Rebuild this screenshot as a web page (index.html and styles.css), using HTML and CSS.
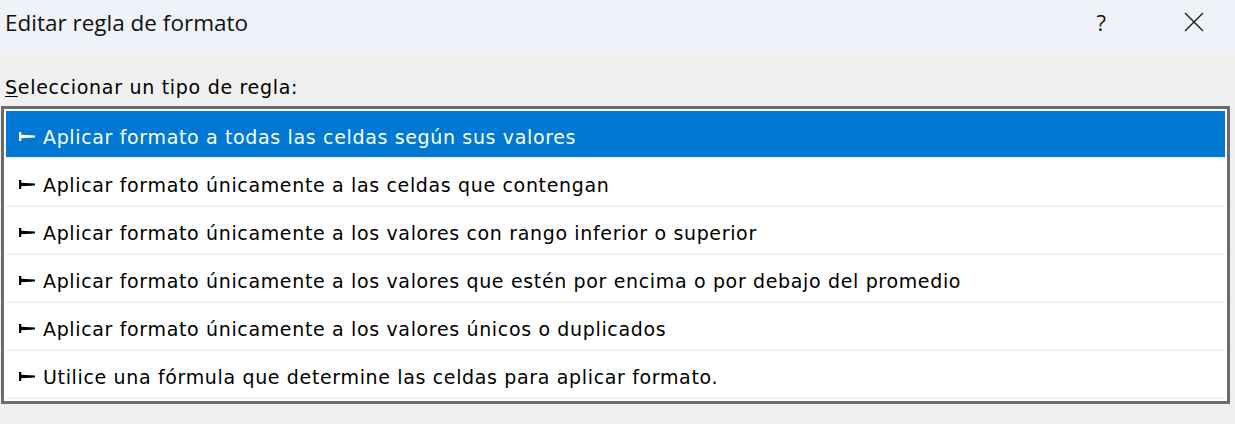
FILE: index.html
```html
<!DOCTYPE html>
<html lang="es">
<head>
  <meta charset="UTF-8">
  <meta name="viewport" content="width=device-width, initial-scale=1.0">
  <title>Editar regla de formato</title>
  <link rel="stylesheet" href="styles.css">
</head>
<body>
  <div class="titlebar">
    <span class="title">Editar regla de formato</span>
    <span class="help">?</span>
    <svg class="close" width="20" height="20" viewBox="0 0 20 20">
      <path d="M1 1 L19 19 M19 1 L1 19" stroke="#1b1b1b" stroke-width="1.4" fill="none"/>
    </svg>
  </div>

  <div class="content">
    <div class="label"><u>S</u>eleccionar un tipo de regla:</div>

    <div class="listbox">
      <div class="rule selected"><span class="marker"></span>Aplicar formato a todas las celdas según sus valores</div>
      <div class="rule"><span class="marker"></span>Aplicar formato únicamente a las celdas que contengan</div>
      <div class="rule"><span class="marker"></span>Aplicar formato únicamente a los valores con rango inferior o superior</div>
      <div class="rule"><span class="marker"></span>Aplicar formato únicamente a los valores que estén por encima o por debajo del promedio</div>
      <div class="rule"><span class="marker"></span>Aplicar formato únicamente a los valores únicos o duplicados</div>
      <div class="rule"><span class="marker"></span>Utilice una fórmula que determine las celdas para aplicar formato.</div>
    </div>
  </div>
</body>
</html>
```

FILE: styles.css
```css
body {
  margin: 0;
  padding: 0;
  background-color: #f0f0f0;
  font-family: "DejaVu Sans", sans-serif;
  color: #000;
}

.titlebar {
  height: 53px;
  background-color: #eff3f9;
  display: flex;
  align-items: center;
  padding: 0 31px 9px 5px;
  box-sizing: border-box;
}

.title {
  flex: 1;
  font-family: "Open Sans", "Noto Sans", sans-serif;
  font-size: 22.5px;
  color: #111;
}

.help {
  font-family: "Open Sans", "Noto Sans", sans-serif;
  font-size: 22px;
  color: #111;
  margin-right: 78px;
}

.close {
  display: block;
}

.content {
  padding-top: 21px;
}

.label {
  font-size: 19px;
  letter-spacing: 0.7px;
  line-height: 26px;
  padding-left: 5px;
  margin-bottom: 6px;
  color: #000;
}

.label u {
  text-underline-offset: 2px;
}

.listbox {
  margin: 0 5px 0 1px;
  border: 3px solid #6b6b6e;
  padding: 2px;
  background-color: #fff;
}

.rule {
  height: 41px;
  padding-top: 5px;
  border-bottom: 2px solid #f0f0f0;
  display: flex;
  align-items: center;
  font-size: 19px;
  letter-spacing: 0.65px;
  color: #000;
  padding-left: 13px;
}

.rule.selected {
  background-color: #0078d4;
  color: #fff;
}

.marker {
  width: 16px;
  height: 9px;
  margin-right: 8px;
  background-color: #000;
  clip-path: polygon(0 0, 14% 0, 14% 30%, 100% 40%, 100% 60%, 14% 70%, 14% 100%, 0 100%);
}

.rule.selected .marker {
  background-color: #fff;
}
```
